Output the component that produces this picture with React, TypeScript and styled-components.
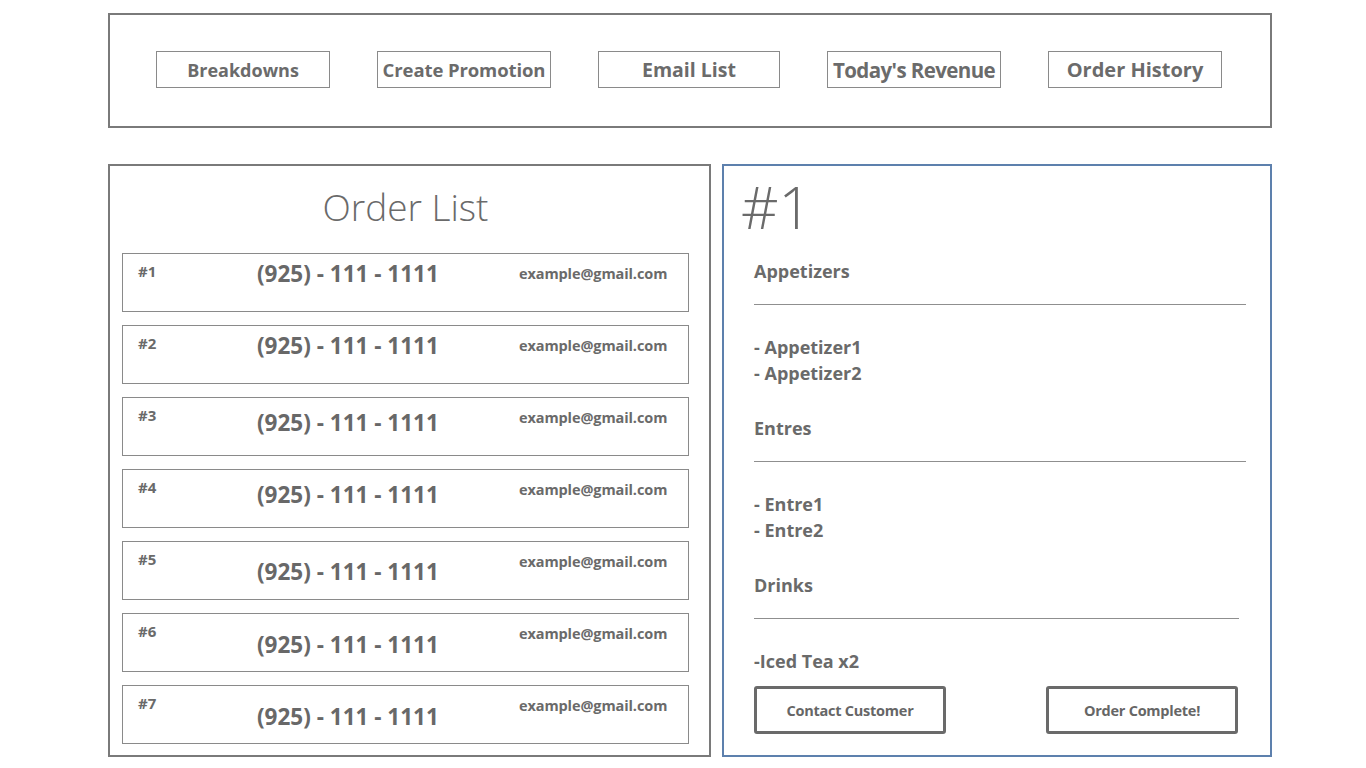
import React from "react";
import styled, { createGlobalStyle } from "styled-components";

const Global = createGlobalStyle`
  html, body { margin: 0; padding: 0; background: #ffffff; }
  body { font-family: "Open Sans", "Noto Sans", "Liberation Sans", sans-serif; color: #666; }
  * { box-sizing: border-box; }
`;

const Page = styled.div`
  width: 1164px;
  margin: 13px 0 0 108px;
  display: flex;
  flex-direction: column;
  gap: 36px;
`;

const TopBar = styled.nav`
  height: 115px;
  border: 2px solid #7a7a7a;
  display: flex;
  align-items: center;
  justify-content: space-between;
  padding: 0 48px 2px 46px;
`;

const NavButton = styled.button<{ $w: number; $size: number; $stretch?: number }>`
  width: ${(p) => p.$w}px;
  height: 37px;
  background: #fff;
  border: 1px solid #8a8a8a;
  font-family: "Open Sans", "Noto Sans", sans-serif;
  font-weight: 700;
  font-size: ${(p) => p.$size}px;
  color: #6b6b6b;
  padding: 0;
  letter-spacing: ${(p) => p.$stretch ?? 0}px;
  white-space: nowrap;
  display: flex;
  align-items: center;
  justify-content: center;
`;

const Main = styled.div`
  display: flex;
  gap: 11px;
  height: 593px;
`;

const ListPanel = styled.section`
  width: 604px;
  border: 2px solid #7a7a7a;
  padding: 0 20px 0 12px;
  display: flex;
  flex-direction: column;
`;

const Title = styled.h1`
  margin: 0 0 7px;
  height: 80px;
  display: flex;
  align-items: center;
  justify-content: center;
  font-weight: 300;
  font-size: 37px;
  color: #6a6a6a;
`;

const Rows = styled.div`
  display: flex;
  flex-direction: column;
  gap: 13px;
`;

const Row = styled.div`
  height: 59px;
  border: 1.5px solid #8a8a8a;
  display: grid;
  grid-template-columns: 119px 262px auto;
  align-items: start;
  padding-left: 15px;
`;

const OrderNo = styled.span`
  font-weight: 700;
  font-size: 15px;
  line-height: 20px;
  margin-top: 7px;
  color: #6a6a6a;
`;

const Phone = styled.span<{ $drop: number }>`
  font-weight: 700;
  font-size: 22.5px;
  line-height: 28px;
  margin-top: ${(p) => 6 + p.$drop}px;
  color: #686868;
  white-space: nowrap;
`;

const Email = styled.span`
  font-weight: 700;
  font-size: 14.5px;
  line-height: 20px;
  margin-top: 10px;
  color: #6a6a6a;
  white-space: nowrap;
  letter-spacing: -0.1px;
`;

const DetailPanel = styled.section`
  flex: 1;
  border: 2px solid #5d80ad;
  padding: 6px 24px 0 30px;
  display: flex;
  flex-direction: column;
`;

const BigNumber = styled.div`
  font-weight: 300;
  font-size: 58px;
  line-height: 70px;
  margin-left: -13px;
  color: #6a6a6a;
`;

const Heading = styled.h2<{ $first?: boolean }>`
  margin: ${(p) => (p.$first ? 16 : 29)}px 0 0;
  font-size: 18px;
  font-weight: 700;
  line-height: 26px;
  color: #6a6a6a;
`;

const Rule = styled.hr<{ $w: number }>`
  margin: 20px 0 0;
  width: ${(p) => p.$w}px;
  height: 0;
  border: none;
  border-top: 1px solid #8f8f8f;
`;

const Items = styled.ul`
  list-style: none;
  margin: 29px 0 0;
  padding: 0;
`;

const Item = styled.li`
  font-size: 18px;
  font-weight: 700;
  line-height: 26px;
  color: #6a6a6a;
`;

const Actions = styled.div`
  margin-top: 12px;
  display: flex;
  justify-content: space-between;
  width: 484px;
`;

const ActionButton = styled.button`
  width: 192px;
  height: 48px;
  border: 3px solid #6a6a6a;
  border-radius: 3px;
  background: #fff;
  font-family: "Open Sans", "Noto Sans", sans-serif;
  font-weight: 700;
  font-size: 14.5px;
  color: #666;
  letter-spacing: -0.25px;
`;

const navButtons = [
  { label: "Breakdowns", w: 174, size: 18 },
  { label: "Create Promotion", w: 174, size: 18.5, stretch: -0.1 },
  { label: "Email List", w: 182, size: 19.5 },
  { label: "Today's Revenue", w: 174, size: 20.5, stretch: -0.6 },
  { label: "Order History", w: 174, size: 20 },
];

const orders = [
  { n: 1, drop: 0 },
  { n: 2, drop: 0 },
  { n: 3, drop: 5 },
  { n: 4, drop: 5 },
  { n: 5, drop: 10 },
  { n: 6, drop: 11 },
  { n: 7, drop: 11 },
];

const sections = [
  { title: "Appetizers", rule: 492, items: ["- Appetizer1", "- Appetizer2"] },
  { title: "Entres", rule: 492, items: ["- Entre1", "- Entre2"] },
  { title: "Drinks", rule: 485, items: ["-Iced Tea x2"] },
];

export default function App() {
  return (
    <>
      <Global />
      <Page>
        <TopBar>
          {navButtons.map((b) => (
            <NavButton key={b.label} $w={b.w} $size={b.size} $stretch={b.stretch}>
              {b.label}
            </NavButton>
          ))}
        </TopBar>
        <Main>
          <ListPanel>
            <Title>Order List</Title>
            <Rows>
              {orders.map((o) => (
                <Row key={o.n}>
                  <OrderNo>#{o.n}</OrderNo>
                  <Phone $drop={o.drop}>(925) - 111 - 1111</Phone>
                  <Email>example@gmail.com</Email>
                </Row>
              ))}
            </Rows>
          </ListPanel>
          <DetailPanel>
            <BigNumber>#1</BigNumber>
            {sections.map((s, i) => (
              <React.Fragment key={s.title}>
                <Heading $first={i === 0}>{s.title}</Heading>
                <Rule $w={s.rule} />
                <Items>
                  {s.items.map((it) => (
                    <Item key={it}>{it}</Item>
                  ))}
                </Items>
              </React.Fragment>
            ))}
            <Actions>
              <ActionButton>Contact Customer</ActionButton>
              <ActionButton>Order Complete!</ActionButton>
            </Actions>
          </DetailPanel>
        </Main>
      </Page>
    </>
  );
}
